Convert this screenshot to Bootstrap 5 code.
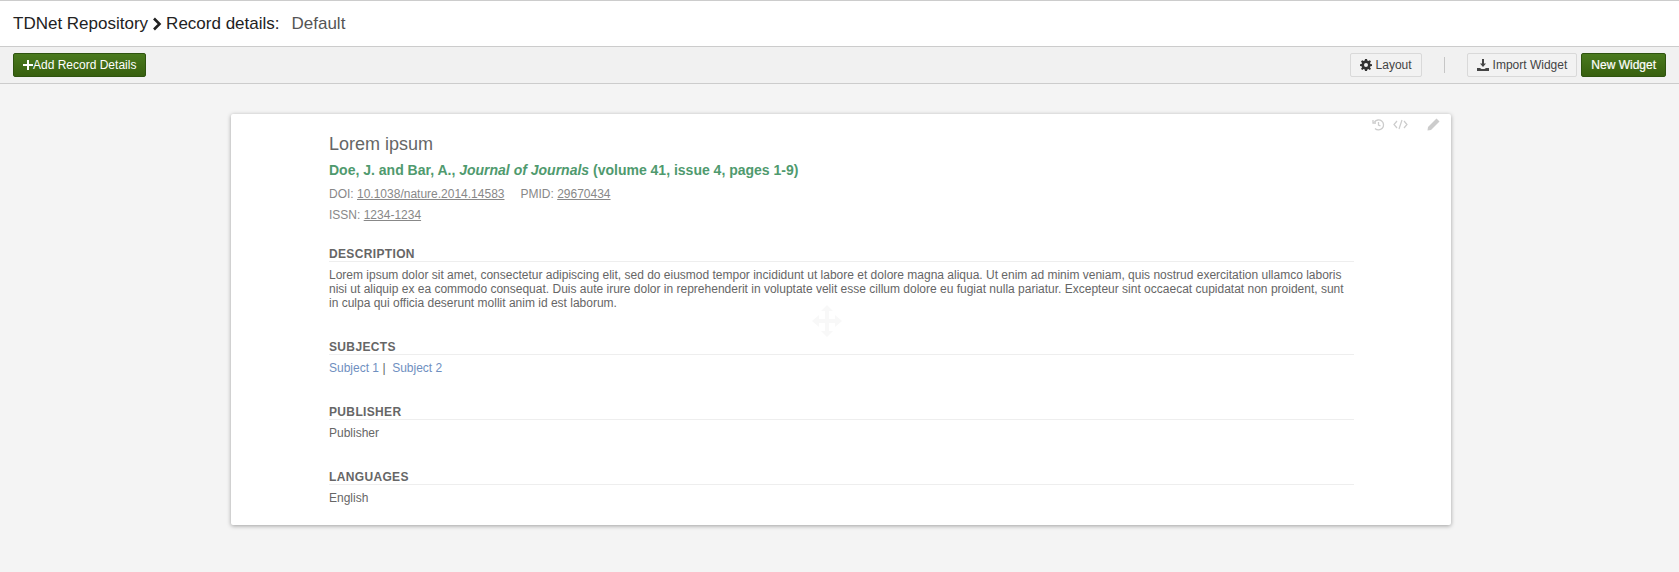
<!DOCTYPE html>
<html lang="en"><head><meta charset="utf-8"><title>Record details</title>
<link href="https://cdn.jsdelivr.net/npm/bootstrap@5.3.0/dist/css/bootstrap.min.css" rel="stylesheet">
<style>
html,body{height:100%}
body{font-family:"Liberation Sans",Arial,sans-serif;background:#f4f4f4;color:#555;font-size:12px;overflow:hidden}
.page-head{height:47px;background:#fff;border-top:1px solid #ccc;border-bottom:1px solid #ccc;padding-left:13px;font-size:17px;color:#222}
.page-head .sub{color:#555;margin-left:12px}
.tool-bar{height:37px;background:#f1f1f1;border-bottom:1px solid #ccc;padding:0 13px}
.btn-green{background:linear-gradient(#4a7a1e,#38600f);border:1px solid #2f5410;color:#fff;font-size:12px;height:24px;padding:0 9px;border-radius:2px;line-height:22px}
.btn-green:hover{color:#fff}
.btn-plain{background:#f2f2f2;border:1px solid #d9d9d9;color:#444;font-size:12px;height:24px;padding:0 9px;border-radius:2px;line-height:22px}
.sep{width:1px;height:16px;background:#c6c6c6;margin:0 22px}
.rec-card{width:1220px;height:411px;margin:30px 0 0 231px;background:#fff;border-radius:2px;box-shadow:0 1px 4px rgba(0,0,0,.35);padding:20px 97px 0 98px;position:relative}
.rec-title{font-size:18px;line-height:20px;color:#666;margin:0 0 7px}
.rec-auth{font-size:14px;line-height:18px;font-weight:700;color:#4f9a6e;margin:0 0 5px}
.rec-meta{font-size:12px;line-height:21px;color:#888}
.rec-meta a{color:#888}
.rec-sect{margin-top:30px}
.rec-sect.first{margin-top:21px}
.rec-h{font-size:12px;font-weight:700;letter-spacing:.35px;line-height:14px;color:#666;border-bottom:1px solid #eee;text-transform:uppercase;margin:0 0 6px}
.rec-body{font-size:12px;line-height:14px;color:#666;margin:0}
.rec-body a{color:#6f8fbf;text-decoration:none}
.tools{position:absolute;top:4px;right:11px;color:#ccc}
.mover{position:absolute;left:581px;top:191px;opacity:1}
</style></head>
<body>
<header class="page-head d-flex align-items-center">TDNet Repository
<svg class="mx-1" width="10" height="14" viewBox="0 0 10 14" fill="none" stroke="#222" stroke-width="2.6"><path d="M2 1.5 7.5 7 2 12.5"/></svg>
Record details:<span class="sub">Default</span></header>
<div class="tool-bar d-flex align-items-center">
<button class="btn btn-green d-inline-flex align-items-center" type="button"><svg width="10" height="10" viewBox="0 0 10 10" fill="#fff"><path d="M4 0h2v4h4v2H6v4H4V6H0V4h4z"/></svg>Add Record Details</button>
<div class="ms-auto d-flex align-items-center">
<button class="btn btn-plain d-inline-flex align-items-center gap-1" type="button"><svg width="12" height="12" viewBox="0 0 12 12" fill="#333"><path fill-rule="evenodd" d="M5 0h2l.3 1.6 1.1.5L9.800 1.200 11 2.600 10 3.900l.4 1.100L12 5.200v1.800l-1.600.3-.4 1.100 1 1.300-1.200 1.300-1.400-.9-1.100.4L7 12H5l-.3-1.500-1.100-.4-1.400.9L1 9.700l1-1.300-.4-1.100L0 7V5.200l1.600-.2L2 3.900 1 2.600l1.200-1.400 1.400.9 1.100-.5zM6 4a2 2 0 1 0 0 4 2 2 0 0 0 0-4z"/></svg>Layout</button>
<span class="sep"></span>
<button class="btn btn-plain d-inline-flex align-items-center gap-1" type="button"><svg width="12" height="12" viewBox="0 0 12 12" fill="#444"><path d="M5 0h2v4.500h2L6 8 3 4.500h2z"/><path d="M0 9h3l1.500 1h3L9 9h3v3H0z"/></svg>Import Widget</button>
<button class="btn btn-green ms-1" type="button"><b class="fw-normal" style="-webkit-text-stroke:.2px #fff">New Widget</b></button>
</div></div>
<main class="rec-card">
<div class="tools d-flex align-items-center"><svg width="13" height="13" viewBox="0 0 13 13" fill="none" stroke="#ccc" stroke-width="1.300"><path d="M2.500 4A5 5 0 1 1 3 10.500"/><path d="M1 2v3h3" /><path d="M6.500 4v3l2 1"/></svg>
<svg class="ms-2" width="15" height="11" viewBox="0 0 15 11" fill="none" stroke="#ccc" stroke-width="1.200"><path d="M4 2 1 5.500 4 9M11 2l3 3.500L11 9M9 1 6 10"/></svg>
<svg class="ms-3" style="margin-left:19px!important" width="13" height="13" viewBox="0 0 13 13" fill="#ccc"><path d="M9.500.5 12.500 3.500 4 12 .5 12.500 1 9z"/></svg></div>
<svg class="mover" width="30" height="32" viewBox="0 0 30 32" fill="#f8f8f8"><path d="M15 0l6 6h-4v8h6v-4l7 6-7 6v-4h-6v8h4l-6 6-6-6h4v-8H7v4l-7-6 7-6v4h6V6H9z"/></svg>
<h1 class="rec-title fw-normal">Lorem ipsum</h1>
<p class="rec-auth">Doe, J. and Bar, A., <i>Journal of Journals</i> (volume 41, issue 4, pages 1-9)</p>
<div class="rec-meta">DOI: <a href="#">10.1038/nature.2014.14583</a><span class="ms-3">PMID: <a href="#">29670434</a></span></div>
<div class="rec-meta">ISSN: <a href="#">1234-1234</a></div>
<section class="rec-sect first"><h2 class="rec-h">Description</h2>
<p class="rec-body">Lorem ipsum dolor sit amet, consectetur adipiscing elit, sed do eiusmod tempor incididunt ut labore et dolore magna aliqua. Ut enim ad minim veniam, quis nostrud exercitation ullamco laboris nisi ut aliquip ex ea commodo consequat. Duis aute irure dolor in reprehenderit in voluptate velit esse cillum dolore eu fugiat nulla pariatur. Excepteur sint occaecat cupidatat non proident, sunt in culpa qui officia deserunt mollit anim id est laborum.</p></section>
<section class="rec-sect"><h2 class="rec-h">Subjects</h2><p class="rec-body"><a href="#">Subject 1</a> |&nbsp; <a href="#">Subject 2</a></p></section>
<section class="rec-sect"><h2 class="rec-h">Publisher</h2><p class="rec-body">Publisher</p></section>
<section class="rec-sect"><h2 class="rec-h">Languages</h2><p class="rec-body">English</p></section>
</main>
<script src="https://cdn.jsdelivr.net/npm/bootstrap@5.3.0/dist/js/bootstrap.bundle.min.js"></script>
</body></html>
